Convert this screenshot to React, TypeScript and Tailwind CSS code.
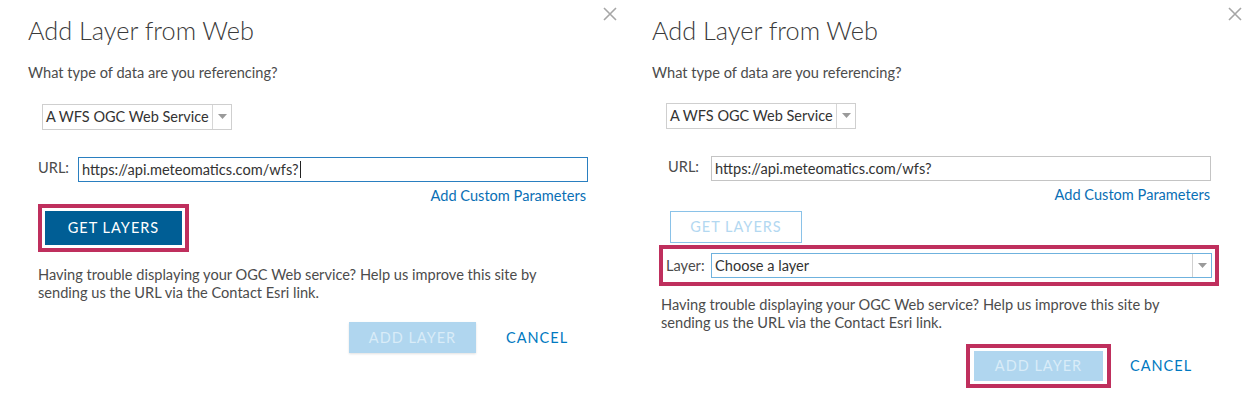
import React from "react";

const font = { fontFamily: "Lato, 'Open Sans', sans-serif" };

function CloseX() {
  return (
    <svg width="14" height="14" viewBox="0 0 14 14" className="absolute top-[7px] right-[8px]">
      <path d="M1 1 L13 13 M13 1 L1 13" stroke="#a6a6a6" strokeWidth="1.6" fill="none" />
    </svg>
  );
}

function Arrow() {
  return (
    <svg width="9" height="6" viewBox="0 0 9 6">
      <path d="M0 0 H9 L4.5 5 Z" fill="#9a9a9a" />
    </svg>
  );
}

function TypeSelect() {
  return (
    <div className="flex h-[26px] w-[190px] items-center border border-[#cfcfcf] bg-white">
      <span className="flex-1 pl-[3px] text-[14.5px] text-[#333]">A WFS OGC Web Service</span>
      <span className="flex h-full w-[19px] items-center justify-center border-l border-[#d6d6d6]">
        <Arrow />
      </span>
    </div>
  );
}

function LeftPanel() {
  return (
    <div className="relative h-[409px] w-[625px] shrink-0 bg-white pl-[28px] pt-[14px]">
      <CloseX />
      <h1 className="text-[25.3px] font-light leading-[32px] text-[#3a3a3a]">Add Layer from Web</h1>
      <p className="mt-[17px] text-[14.6px] leading-[20px] text-[#4c4c4c]">What type of data are you referencing?</p>
      <div className="ml-[14px] mt-[21px]">
        <TypeSelect />
      </div>
      <div className="ml-[10px] mt-[27px] flex items-start">
        <span className="w-[40px] pt-[1px] text-[14.6px] leading-[20px] text-[#4c4c4c]">URL:</span>
        <div className="flex h-[25px] w-[510px] items-center border border-[#2a7fc0] bg-white pl-[3px] text-[14.6px] text-[#333]">
          https://api.meteomatics.com/wfs?
          <span className="ml-[1px] inline-block h-[17px] w-px bg-[#222]" />
        </div>
      </div>
      <div className="mt-[6px] flex w-[558px] justify-end text-[14.6px] leading-[16px] text-[#0a6fb5]">Add Custom Parameters</div>
      <div className="ml-[10px] w-fit border-[4px] border-[#bf2f5d] p-[3px]">
        <button className="flex h-[34px] w-[137px] items-center justify-center bg-[#005e95] text-[14.5px] tracking-[1px] text-white">
          GET LAYERS
        </button>
      </div>
      <p className="ml-[10px] mt-[14px] text-[14.6px] leading-[18px] text-[#4c4c4c]">
        Having trouble displaying your OGC Web service? Help us improve this site by
        <br />
        sending us the URL via the Contact Esri link.
      </p>
      <div className="ml-[321px] mt-[20px] flex items-center gap-[30px]">
        <button className="flex h-[31px] w-[127px] items-center justify-center bg-[#b0d6ef] text-[14.5px] tracking-[1px] text-[#d9ecf8] shadow-[0_1px_2px_rgba(0,0,0,0.12)]">
          ADD LAYER
        </button>
        <span className="text-[14.5px] tracking-[1px] text-[#0079c1]">CANCEL</span>
      </div>
    </div>
  );
}

function RightPanel() {
  return (
    <div className="relative h-[409px] w-[625px] shrink-0 bg-white pl-[27px] pt-[14px]">
      <CloseX />
      <h1 className="text-[25.3px] font-light leading-[32px] text-[#3a3a3a]">Add Layer from Web</h1>
      <p className="mt-[17px] text-[14.6px] leading-[20px] text-[#4c4c4c]">What type of data are you referencing?</p>
      <div className="ml-[14px] mt-[20px]">
        <TypeSelect />
      </div>
      <div className="ml-[16px] mt-[27px] flex items-start">
        <span className="w-[43px] pt-[1px] text-[14.6px] leading-[20px] text-[#4c4c4c]">URL:</span>
        <div className="flex h-[25px] w-[500px] items-center border border-[#c4c4c4] bg-white pl-[3px] text-[14.6px] text-[#333]">
          https://api.meteomatics.com/wfs?
        </div>
      </div>
      <div className="mt-[6px] flex w-[558px] justify-end text-[14.6px] leading-[16px] text-[#0a6fb5]">Add Custom Parameters</div>
      <div className="ml-[18px] mt-[8px]">
        <div className="flex h-[32px] w-[132px] items-center justify-center border border-[#8ac2e8] text-[14.5px] tracking-[1px] text-[#b3d8f1]">
          GET LAYERS
        </div>
      </div>
      <div className="ml-[7px] mt-[2px] flex h-[41px] w-[560px] items-center border-[4px] border-[#bf2f5d] pl-[3px] pr-[3px]">
        <span className="w-[45px] text-[14.6px] text-[#4c4c4c]">Layer:</span>
        <div className="flex h-[25px] flex-1 items-center border border-[#6fb2de] bg-white">
          <span className="flex-1 pl-[3px] text-[14.6px] text-[#333]">Choose a layer</span>
          <span className="flex h-full w-[19px] items-center justify-center border-l border-[#d0d0d0]">
            <Arrow />
          </span>
        </div>
      </div>
      <p className="ml-[9px] mt-[10px] text-[14.6px] leading-[18px] text-[#4c4c4c]">
        Having trouble displaying your OGC Web service? Help us improve this site by
        <br />
        sending us the URL via the Contact Esri link.
      </p>
      <div className="ml-[314px] mt-[12px] flex items-center gap-[19px]">
        <div className="border-[4px] border-[#bf2f5d] px-[4px] py-[3px]">
          <button className="flex h-[30px] w-[129px] items-center justify-center bg-[#b0d6ef] text-[14.5px] tracking-[1px] text-[#d9ecf8]">
            ADD LAYER
          </button>
        </div>
        <span className="text-[14.5px] tracking-[1px] text-[#0079c1]">CANCEL</span>
      </div>
    </div>
  );
}

export default function App() {
  return (
    <div className="flex h-[409px] w-[1250px] overflow-hidden bg-white" style={font}>
      <LeftPanel />
      <RightPanel />
    </div>
  );
}
